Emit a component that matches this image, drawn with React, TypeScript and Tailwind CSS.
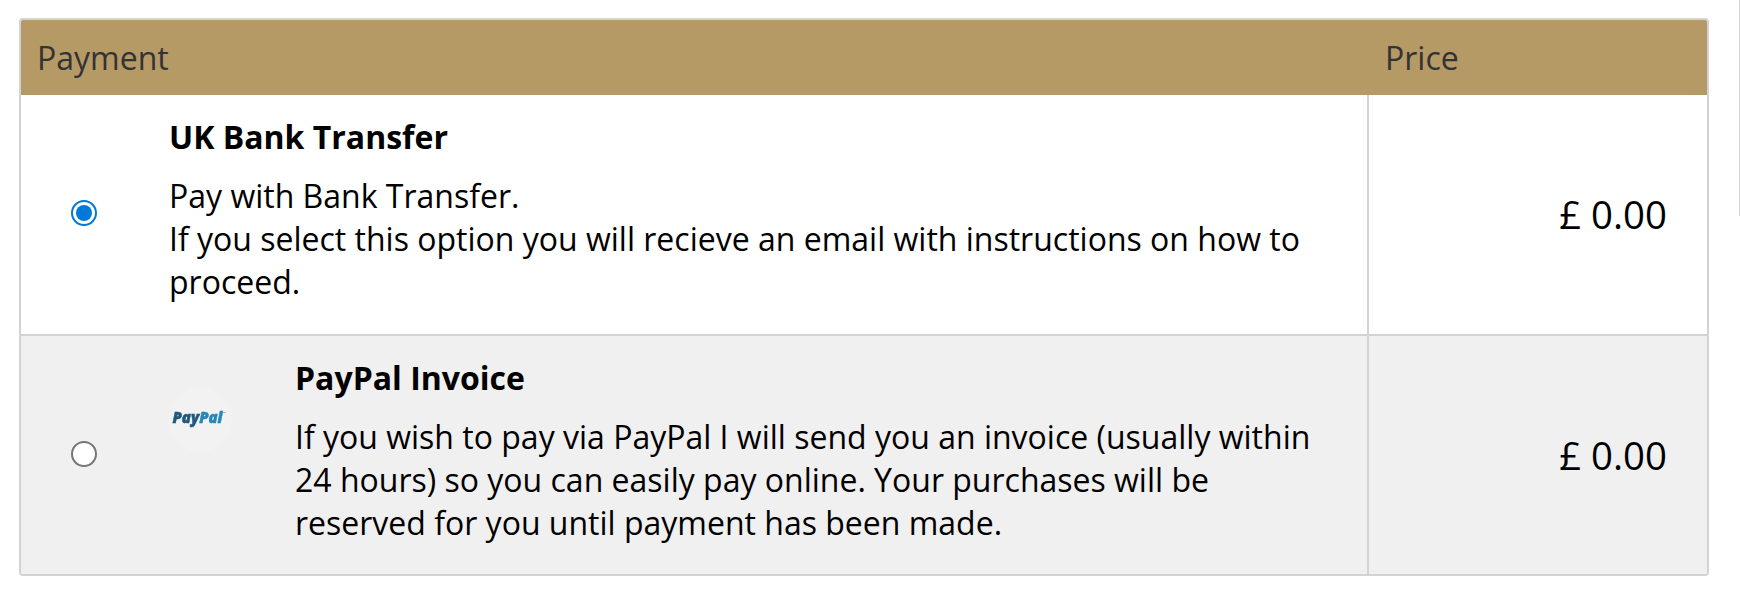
import { useState } from 'react'
import type { ReactNode } from 'react'
import clsx from 'clsx'

interface PaymentMethod {
  id: string
  title: string
  lines: string[]
  price: string
  logo?: ReactNode
}

function PayPalLogo() {
  return (
    <svg width="64" height="64" viewBox="0 0 64 64" role="img" aria-label="PayPal">
      <circle cx="32" cy="32" r="32" fill="#f2f2f2" />
      <text
        x="4.5"
        y="34.7"
        fontFamily="'Open Sans', sans-serif"
        fontSize="15.5"
        fontWeight="800"
        fontStyle="italic"
        textLength="50"
        lengthAdjust="spacingAndGlyphs"
        style={{ filter: 'blur(0.6px)' }}
      >
        <tspan fill="#20587f" stroke="#20587f" strokeWidth="0.5">Pay</tspan>
        <tspan fill="#2588b6" stroke="#2588b6" strokeWidth="0.5">Pal</tspan>
      </text>
      <path d="M55 24.5h3" stroke="#9dbccb" strokeWidth="1" />
    </svg>
  )
}

const METHODS: PaymentMethod[] = [
  {
    id: 'bank',
    title: 'UK Bank Transfer',
    lines: [
      'Pay with Bank Transfer.',
      'If you select this option you will recieve an email with instructions on how to',
      'proceed.',
    ],
    price: '£ 0.00',
  },
  {
    id: 'paypal',
    title: 'PayPal Invoice',
    lines: [
      'If you wish to pay via PayPal I will send you an invoice (usually within',
      '24 hours) so you can easily pay online. Your purchases will be',
      'reserved for you until payment has been made.',
    ],
    price: '£ 0.00',
    logo: <PayPalLogo />,
  },
]

interface RadioProps {
  checked: boolean
  label: string
  onChange: () => void
}

function Radio({ checked, label, onChange }: RadioProps) {
  return (
    <label className="mt-[105px] grid size-[26px] shrink-0 cursor-pointer place-items-center">
      <input
        type="radio"
        name="payment"
        aria-label={label}
        checked={checked}
        onChange={onChange}
        className="col-start-1 row-start-1 size-[26px] appearance-none rounded-full border-2 border-[#767676] bg-white checked:border-[#0078d7]"
      />
      {checked && <span className="pointer-events-none col-start-1 row-start-1 size-4 rounded-full bg-[#0078d7]" />}
    </label>
  )
}

export default function App() {
  const [selected, setSelected] = useState('bank')

  return (
    <div className="flex h-[604px] w-[1740px] items-start justify-between bg-white pl-[19px] font-['Open_Sans',sans-serif] text-[32px] leading-[43px] text-black">
      <div className="mt-[18px] w-[1690px] overflow-hidden rounded-[4px] border-2 border-[#d3d3d3]">
        <div className="flex h-[75px] items-center bg-[#b59a65] text-[#333333]">
          <div className="flex-1 pl-4">Payment</div>
          <div className="w-[338px] pl-4">Price</div>
        </div>

        {METHODS.map((method, i) => (
          <div
            key={method.id}
            className={clsx('flex', i === 0 ? 'h-[239px]' : 'h-[240px] border-t-2 border-[#d3d3d3] bg-[#f0f0f0]')}
          >
            <div className="flex flex-1 items-start pl-[50px]">
              <Radio
                checked={selected === method.id}
                label={method.title}
                onChange={() => setSelected(method.id)}
              />
              {method.logo && <div className="mt-[52px] ml-[71px] shrink-0">{method.logo}</div>}
              <div className={clsx('pt-5 whitespace-nowrap', method.logo ? 'ml-[63px]' : 'ml-[72px]')}>
                <div className="mb-4 font-bold">{method.title}</div>
                {method.lines.map(line => (
                  <div key={line}>{line}</div>
                ))}
              </div>
            </div>
            <div className="flex w-[340px] items-center justify-end border-l-2 border-[#d3d3d3] pr-10 text-[38.4px]">
              {method.price}
            </div>
          </div>
        ))}
      </div>

      {/* edge of the neighbouring panel */}
      <div className="h-[216px] w-px bg-[#d3d3d3]" />
    </div>
  )
}
